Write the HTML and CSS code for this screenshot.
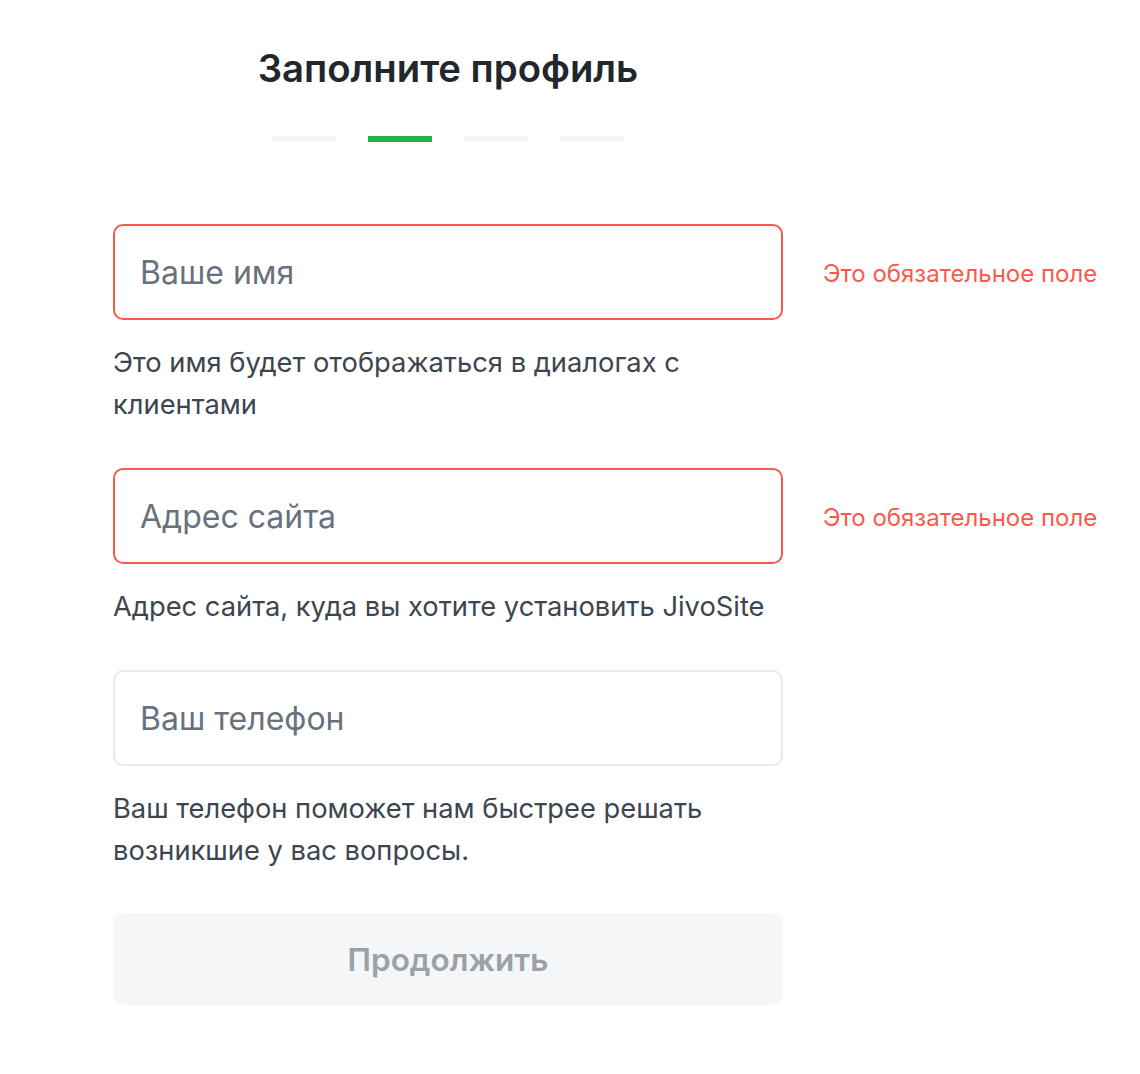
FILE: index.html
```html
<!DOCTYPE html>
<html lang="ru">
<head>
<meta charset="utf-8">
<title>Заполните профиль</title>
<link rel="stylesheet" href="styles.css">
</head>
<body>
<main class="page">
  <h1 class="title">Заполните профиль</h1>
  <div class="steps">
    <span class="step"></span>
    <span class="step step-active"></span>
    <span class="step"></span>
    <span class="step"></span>
  </div>
  <form class="form">
    <div class="field">
      <div class="row">
        <input class="input input-error" type="text" placeholder="Ваше имя">
        <span class="error">Это обязательное поле</span>
      </div>
      <p class="hint">Это имя будет отображаться в диалогах с клиентами</p>
    </div>
    <div class="field">
      <div class="row">
        <input class="input input-error" type="text" placeholder="Адрес сайта">
        <span class="error">Это обязательное поле</span>
      </div>
      <p class="hint">Адрес сайта, куда вы хотите установить JivoSite</p>
    </div>
    <div class="field">
      <div class="row">
        <input class="input" type="text" placeholder="Ваш телефон">
      </div>
      <p class="hint">Ваш телефон поможет нам быстрее решать возникшие у вас вопросы.</p>
    </div>
    <button class="submit" type="button" disabled>Продолжить</button>
  </form>
</main>
</body>
</html>
```
FILE: styles.css
```css
* { box-sizing: border-box; }
html, body { margin: 0; padding: 0; background: #ffffff; }
body { font-family: Inter, "Noto Sans", sans-serif; color: #3d4550; }

.page {
  width: 670px;
  margin-left: 113px;
  padding-top: 46px;
}

.title {
  margin: 0;
  text-align: center;
  font-size: 38.3px;
  line-height: 44px;
  font-weight: 600;
  color: #22272e;
}

.steps {
  display: flex;
  justify-content: center;
  gap: 32px;
  margin-top: 46px;
}
.step {
  width: 64px;
  height: 6px;
  background: #f4f5f7;
}
.step-active { background: #22b34c; }

.form {
  margin-top: 82px;
  display: flex;
  flex-direction: column;
}

.field { margin-bottom: 42px; }

.row {
  display: flex;
  align-items: center;
  width: 670px;
}

.input {
  flex: 0 0 670px;
  width: 670px;
  height: 96px;
  border: 2px solid #e7e9ec;
  border-radius: 10px;
  padding: 0 25px;
  font-family: inherit;
  font-size: 32px;
  color: #22272e;
  outline: none;
  background: #fff;
}
.input::placeholder { color: #68717d; opacity: 1; }
.input-error { border-color: #f85a4e; }

.error {
  flex: 0 0 auto;
  margin-left: 40px;
  padding-top: 3px;
  white-space: nowrap;
  font-size: 24px;
  color: #f85a4e;
}

.hint {
  margin: 22px 0 0;
  font-size: 27.3px;
  line-height: 42px;
  color: #3d4550;
}

.submit {
  margin-top: -1px;
  width: 670px;
  height: 92px;
  border: none;
  border-radius: 10px;
  background: #f5f6f8;
  font-family: inherit;
  font-size: 31.5px;
  font-weight: 600;
  color: #9aa1a9;
}
```
